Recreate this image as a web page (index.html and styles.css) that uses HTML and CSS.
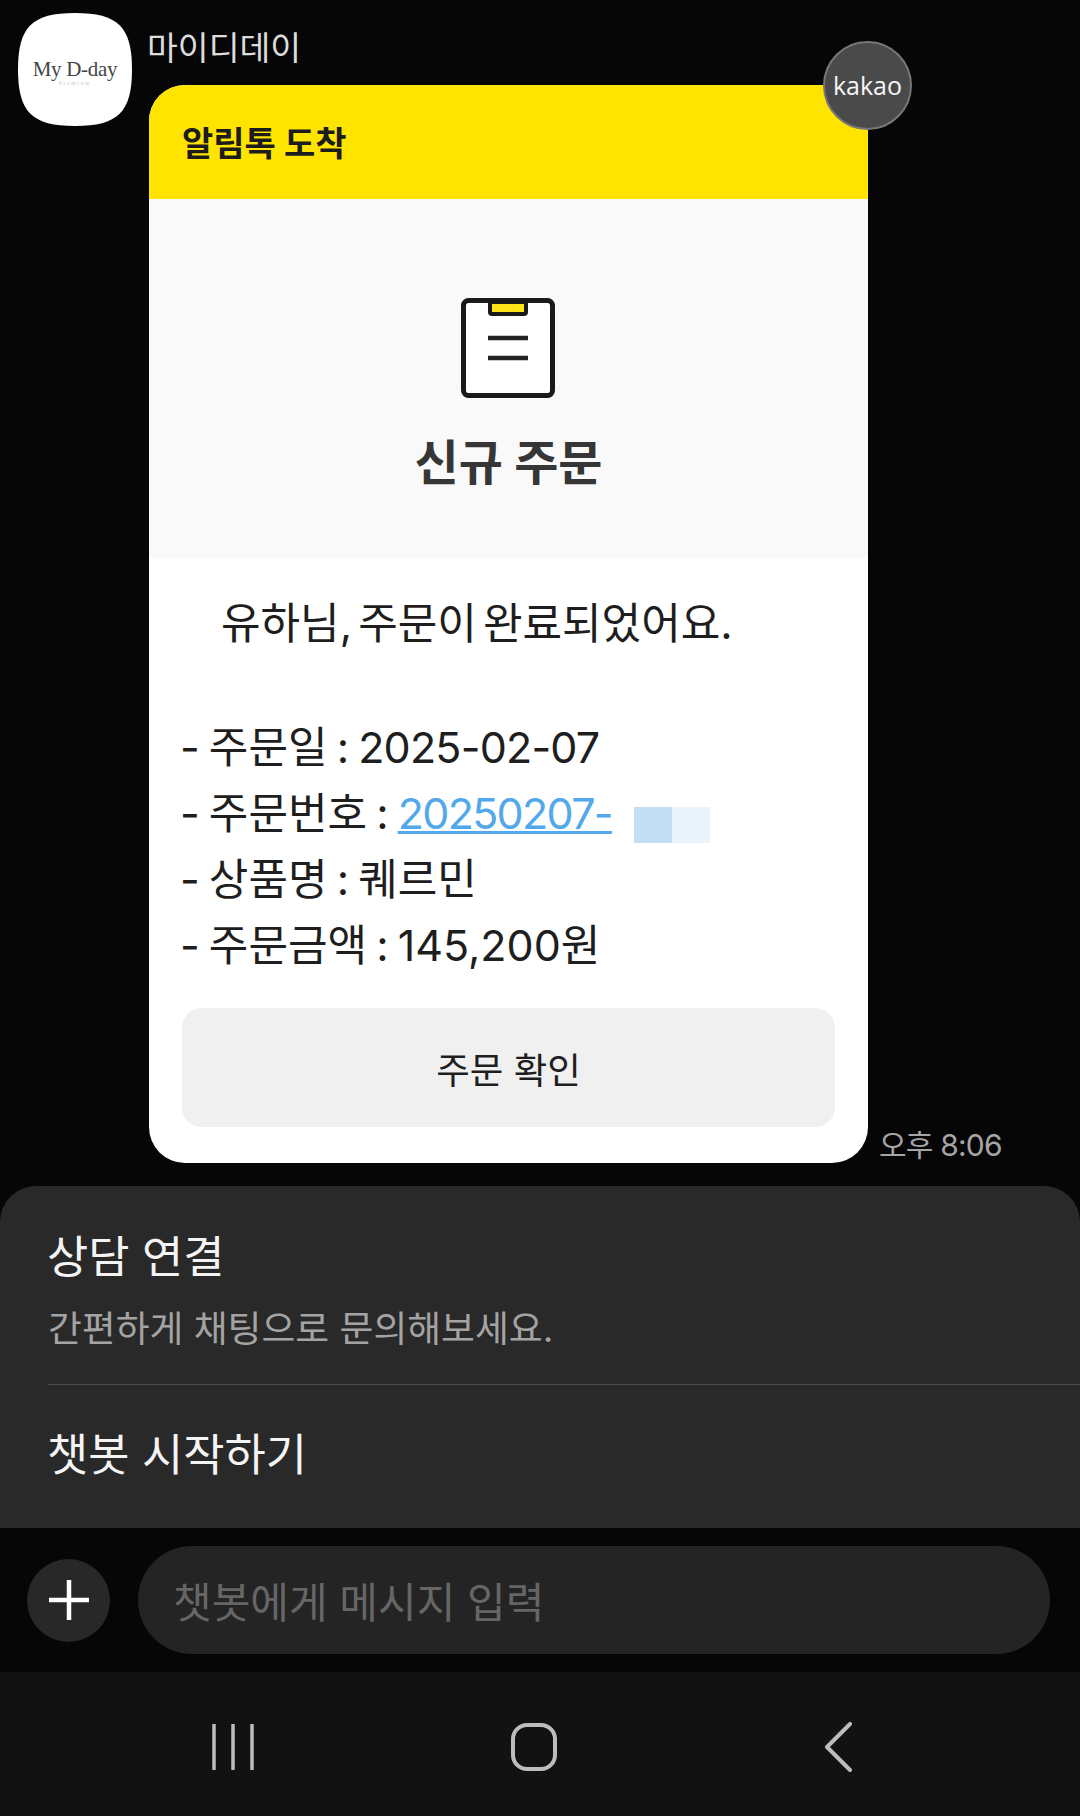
FILE: index.html
```html
<!DOCTYPE html>
<html lang="ko">
<head>
  <meta charset="UTF-8" />
  <meta name="viewport" content="width=device-width, initial-scale=1.0"/>
  <title>마이디데이 알림톡</title>
  <link rel="stylesheet" href="styles.css">
</head>
<body>

  <div class="chat">
    <div class="avatar">
      <span class="logo-name">My D-day</span>
      <span class="logo-sub">Premium</span>
    </div>
    <div class="message">
      <div class="sender">마이디데이</div>
      <div class="bubble-row">
        <div class="card">
          <div class="card-head">알림톡 도착</div>
          <div class="card-hero">
            <svg class="clip-icon" width="94" height="100" viewBox="0 0 94 100">
              <rect x="2.5" y="2.5" width="89" height="95" rx="5" fill="#fff" stroke="#1a1a1a" stroke-width="5"/>
              <path d="M27 3v11a4 4 0 0 0 4 4h32a4 4 0 0 0 4-4V3z" fill="#1a1a1a"/>
              <rect x="31" y="6" width="32" height="8" fill="#ffe41a"/>
              <path d="M27 40h40M27 60h40" stroke="#222" stroke-width="4.5" fill="none"/>
            </svg>
            <h2>신규 주문</h2>
          </div>
          <div class="card-body">
            <p class="greeting">유하님, 주문이 완료되었어요.</p>
            <ul class="order-info">
              <li>- 주문일 : <span class="num">2025-02-07</span></li>
              <li>- 주문번호 : <a href="#">20250207-</a><span class="censor"><i></i><i></i></span></li>
              <li>- 상품명 : 퀘르민</li>
              <li>- 주문금액 : 145,200원</li>
            </ul>
            <button class="card-btn">주문 확인</button>
          </div>
          <div class="kakao-badge">kakao</div>
        </div>
        <div class="time">오후 8:06</div>
      </div>
    </div>
  </div>

  <div class="sheet">
    <div class="sheet-row first">
      <div class="sheet-title">상담 연결</div>
      <div class="sheet-sub">간편하게 채팅으로 문의해보세요.</div>
    </div>
    <div class="sheet-row">
      <div class="sheet-title">챗봇 시작하기</div>
    </div>
  </div>

  <div class="input-bar">
    <div class="plus-btn">
      <svg width="40" height="40" viewBox="0 0 40 40"><path d="M20 0v40M0 20h40" stroke="#fff" stroke-width="4.5"/></svg>
    </div>
    <div class="input-box">챗봇에게 메시지 입력</div>
  </div>

  <div class="nav-bar">
    <svg width="42" height="46" viewBox="0 0 42 46"><path d="M2 1v44M21 1v44M40 1v44" stroke="#bdbdbd" stroke-width="3.5" stroke-linecap="round"/></svg>
    <svg class="home-icon" width="46" height="48" viewBox="0 0 46 48"><rect x="2" y="2" width="42" height="44" rx="14" fill="none" stroke="#bdbdbd" stroke-width="4"/></svg>
    <svg width="30" height="50" viewBox="0 0 30 50"><path d="M27 2L4 25l23 23" fill="none" stroke="#bdbdbd" stroke-width="4" stroke-linecap="round" stroke-linejoin="round"/></svg>
  </div>

</body>
</html>
```

FILE: styles.css
```css
* {
  margin: 0;
  padding: 0;
  box-sizing: border-box;
}

body {
  font-family: Inter, "Noto Sans CJK KR", sans-serif;
  background: #060606;
  width: 1080px;
  height: 1816px;
  overflow: hidden;
  display: flex;
  flex-direction: column;
}

.chat {
  height: 1186px;
  padding: 13px 0 0 18px;
  display: flex;
  gap: 16px;
}

.avatar {
  width: 114px;
  height: 113px;
  background: #fff;
  clip-path: path("M57 0C100 0 114 14 114 56.5S100 113 57 113S0 99 0 56.5S14 0 57 0Z");
  display: flex;
  flex-direction: column;
  align-items: center;
  justify-content: center;
  padding-top: 5px;
  flex-shrink: 0;
}

.logo-name {
  font-family: "Liberation Serif", serif;
  font-size: 21px;
  line-height: 22px;
  letter-spacing: -0.3px;
  color: #444;
}

.logo-sub {
  font-family: "Liberation Serif", serif;
  font-size: 6px;
  line-height: 7px;
  letter-spacing: 1.5px;
  color: #d8cfc4;
}

.sender {
  font-size: 33.5px;
  line-height: 48px;
  color: #dcdcdc;
  height: 72px;
  padding-top: 11px;
  margin-left: -1px;
}

.bubble-row {
  display: flex;
  align-items: flex-end;
  gap: 11px;
  margin-left: 1px;
}

.card {
  width: 719px;
  height: 1078px;
  background: #fff;
  border-radius: 36px;
  position: relative;
}

.card-head {
  height: 114px;
  background: #ffe400;
  border-radius: 36px 36px 0 0;
  padding-left: 33px;
  font-size: 34px;
  font-weight: 700;
  line-height: 118px;
  color: #1c1c1c;
}

.card-hero {
  height: 359px;
  background: #f9f9f9;
  display: flex;
  flex-direction: column;
  align-items: center;
  padding-top: 99px;
}

.clip-icon {
  margin-right: 1px;
}

.card-hero h2 {
  font-size: 48px;
  font-weight: 700;
  line-height: 60px;
  margin-top: 35px;
  color: #363636;
}

.card-body {
  padding: 35px 33px 0;
}

.greeting {
  font-size: 43px;
  line-height: 60px;
  color: #1e1e1e;
  padding-left: 39px;
  word-spacing: -6px;
}

.order-info {
  list-style: none;
  margin: 61px 0 0 -2px;
}

.order-info li {
  font-size: 43px;
  line-height: 66px;
  color: #1e1e1e;
  display: flex;
  white-space: pre;
  word-spacing: -3px;
}

.num {
  letter-spacing: -0.8px;
}

.order-info a {
  color: #52a8ea;
  letter-spacing: -1.7px;
  text-decoration-thickness: 3px;
}

.censor {
  display: flex;
  align-self: flex-end;
  margin: 0 0 3px 22px;
}

.censor i {
  width: 38px;
  height: 36px;
  background: #c4dff3;
}

.censor i + i {
  background: #e8f3fc;
}

.card-btn {
  display: block;
  width: 653px;
  height: 119px;
  margin-top: 30px;
  padding-top: 2px;
  border: none;
  border-radius: 20px;
  background: #f0f0f0;
  font-family: inherit;
  font-size: 36.5px;
  color: #1e1e1e;
}

.kakao-badge {
  position: absolute;
  top: -44px;
  right: -44px;
  width: 89px;
  height: 89px;
  border-radius: 50%;
  background: #4a4a4a;
  border: 2px solid #777;
  color: #f5f5f5;
  font-family: "Open Sans", sans-serif;
  font-size: 25px;
  text-align: center;
  line-height: 85px;
}

.time {
  font-size: 30px;
  line-height: 40px;
  color: #a5a5a5;
  letter-spacing: -0.8px;
  margin-bottom: -2px;
}

.sheet {
  height: 342px;
  background: #292929;
  border-radius: 36px 36px 0 0;
  padding-left: 48px;
}

.sheet-row {
  color: #f4f4f4;
}

.sheet-row.first {
  height: 199px;
  padding-top: 39px;
  border-bottom: 1px solid #4c4c4c;
}

.sheet-row + .sheet-row {
  padding-top: 38px;
}

.sheet-title {
  font-size: 44.8px;
  line-height: 64px;
  margin-left: -1px;
}

.sheet-sub {
  font-size: 36.8px;
  line-height: 52px;
  margin-top: 14px;
  color: #a3a3a3;
}

.input-bar {
  height: 144px;
  background: #060606;
  display: flex;
  align-items: center;
  padding: 0 30px 0 27px;
  gap: 28px;
}

.plus-btn {
  width: 83px;
  height: 83px;
  border-radius: 50%;
  background: #282828;
  display: flex;
  align-items: center;
  justify-content: center;
  flex-shrink: 0;
}

.input-box {
  flex: 1;
  height: 108px;
  border-radius: 54px;
  background: #242424;
  padding-left: 35px;
  font-size: 42px;
  line-height: 114px;
  color: #666;
}

.nav-bar {
  height: 144px;
  background: #121212;
  display: flex;
  align-items: center;
  padding: 6px 227px 0 212px;
  justify-content: space-between;
}

.home-icon {
  margin-right: 10px;
}
```
